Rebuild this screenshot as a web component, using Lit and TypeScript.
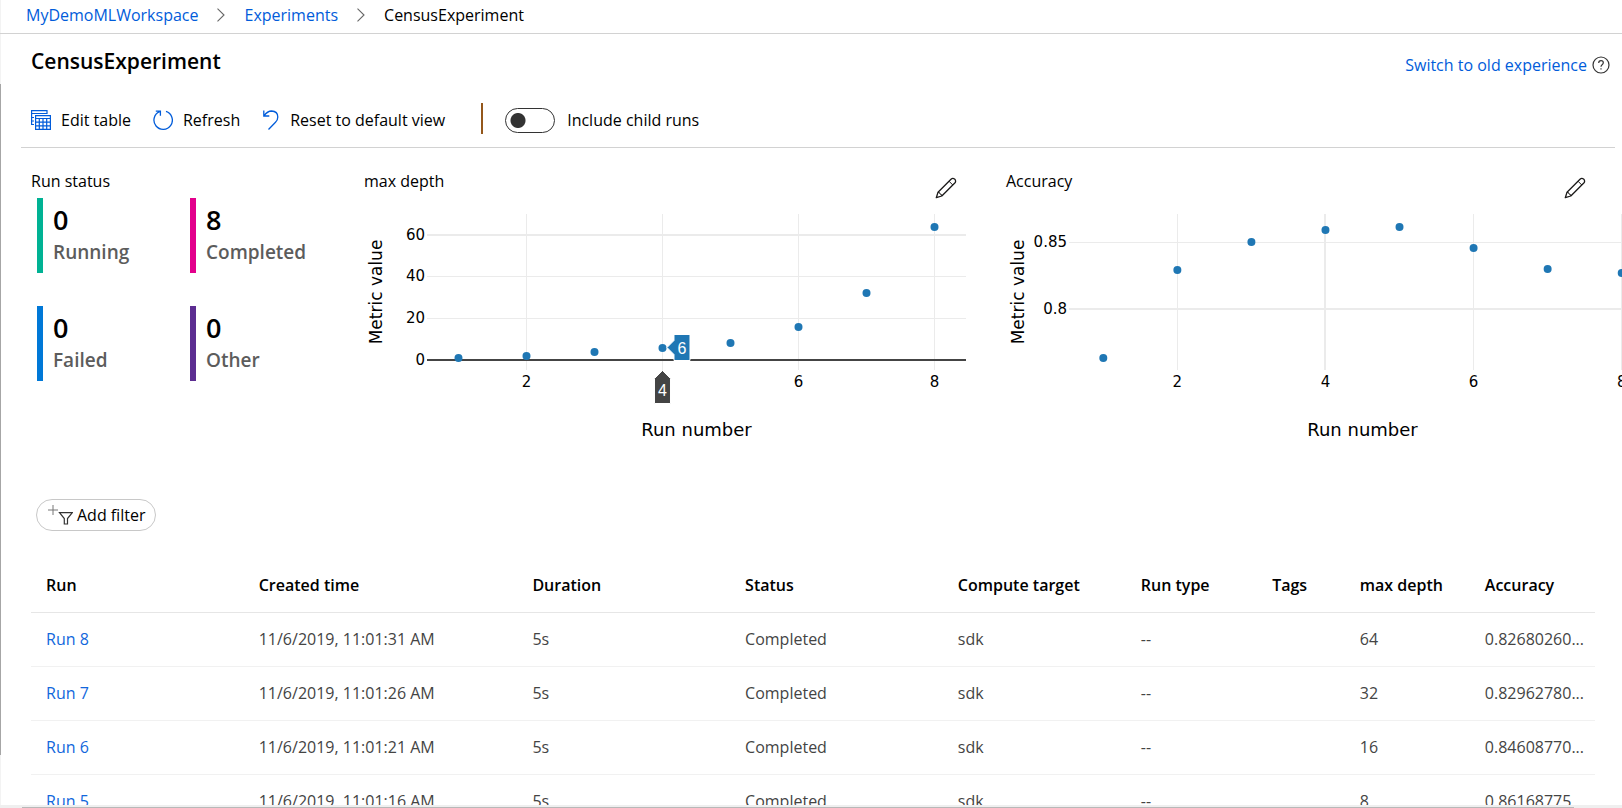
import { LitElement, html, svg, css, nothing } from "lit";
import { customElement, property } from "lit/decorators.js";

interface Run {
  id: number;
  created: string;
  depth: number;
  accuracy: string;
}

interface Tick {
  label: string;
  y: number;
  heavy?: boolean;
}

const RUNS: Run[] = [
  { id: 8, created: "11/6/2019, 11:01:31 AM", depth: 64, accuracy: "0.82680260..." },
  { id: 7, created: "11/6/2019, 11:01:26 AM", depth: 32, accuracy: "0.82962780..." },
  { id: 6, created: "11/6/2019, 11:01:21 AM", depth: 16, accuracy: "0.84608770..." },
  { id: 5, created: "11/6/2019, 11:01:16 AM", depth: 8, accuracy: "0.86168775..." },
];

const COLUMNS = [
  { label: "Run", width: 13.6 },
  { label: "Created time", width: 17.5 },
  { label: "Duration", width: 13.6 },
  { label: "Status", width: 13.6 },
  { label: "Compute target", width: 11.7 },
  { label: "Run type", width: 8.4 },
  { label: "Tags", width: 5.6 },
  { label: "max depth", width: 8 },
  { label: "Accuracy", width: 8 },
];

const STATUSES = [
  { count: 0, label: "Running", tone: "teal" },
  { count: 8, label: "Completed", tone: "pink" },
  { count: 0, label: "Failed", tone: "blue" },
  { count: 0, label: "Other", tone: "purple" },
];

// The x axis covers runs 1 to 8 with a little room on both sides.
const AXIS_START = 0.537;
const AXIS_SPAN = 7.926;
const runX = (run: number) => `${((run - AXIS_START) / AXIS_SPAN) * 100}%`;

@customElement("metric-chart")
export class MetricChart extends LitElement {
  @property() heading = "";
  @property({ attribute: false }) points: number[] = [];
  @property({ attribute: false }) ticks: Tick[] = [];
  @property({ type: Number }) zero = 0;
  @property({ type: Number }) heavyRun = 0;
  @property({ type: Number }) activeRun = 0;
  @property() activeValue = "";

  static styles = css`
    :host {
      display: block;
    }
    .head {
      display: flex;
      justify-content: space-between;
      height: 33px;
      padding-right: var(--tool-inset, 47px);
    }
    h2 {
      margin: 0;
      font-size: 16px;
      line-height: 26px;
      font-weight: 400;
    }
    button {
      align-self: end;
      display: flex;
      padding: 2px;
      border: 0;
      background: none;
      cursor: pointer;
    }
    .body {
      position: relative;
      height: 256px;
      margin: 13px var(--plot-inset, 40px) 0 63px;
    }
    .plot {
      display: block;
      width: 100%;
      height: 256px;
      overflow: visible;
      font-family: "DejaVu Sans", Verdana, sans-serif;
    }
    .tick {
      font-size: 15px;
    }
    .y-title {
      font-size: 17px;
    }
    .x-title {
      font-size: 18px;
    }
    .grid {
      stroke: #ebebeb;
      stroke-width: 1px;
      shape-rendering: crispEdges;
    }
    .heavy {
      stroke-width: 2px;
    }
    .zero {
      stroke: #444;
      stroke-width: 2px;
      shape-rendering: crispEdges;
    }
    .dot {
      fill: #1f77b4;
    }
    .hover {
      overflow: visible;
      font-family: "Liberation Sans", Arial, sans-serif;
      font-size: 16px;
    }
    .value {
      fill: #1f77b4;
      stroke: #fff;
    }
    .run {
      fill: #444;
      stroke: #fff;
    }
    .hover text {
      fill: #fff;
    }
  `;

  render() {
    return html`
      <div class="head">
        <h2>${this.heading}</h2>
        <button aria-label="Edit ${this.heading} chart">
          <svg width="22" height="22" viewBox="0 0 22 22" fill="none" stroke="#1b1a19" stroke-width="1.3" stroke-linejoin="round">
            <path d="M1.3 20.7 3 15.2 16 2.2Q17.8 .6 19.8 2.2Q21.4 4.2 19.8 6L6.8 19Z" />
            <path d="M14 4.2 17.8 8M3 15.2Q5 15 5 17Q7 17 6.8 19" stroke-width="1" />
          </svg>
        </button>
      </div>
      <div class="body">
        <svg class="plot" role="img" aria-label="${this.heading} by run number">
          ${[2, 4, 6, 8].map(
            (n) => svg`
              <line class="grid ${n === this.heavyRun ? "heavy" : ""}" x1=${runX(n)} x2=${runX(n)} y1="0" y2="156" />
              ${n === this.activeRun
                ? nothing
                : svg`<text class="tick" x=${runX(n)} y="173" text-anchor="middle">${n}</text>`}`
          )}
          ${this.ticks.map(
            (t) => svg`
              ${t.y === this.zero
                ? nothing
                : svg`<line class="grid ${t.heavy ? "heavy" : ""}" x1="0" x2="100%" y1=${t.y} y2=${t.y} />`}
              <text class="tick" x="-2" y=${t.y + 5} text-anchor="end">${t.label}</text>`
          )}
          ${this.zero ? svg`<line class="zero" x1="0" x2="100%" y1=${this.zero} y2=${this.zero} />` : nothing}
          ${this.points.map((y, i) => svg`<circle class="dot" cx=${runX(i + 1)} cy=${y} r="4" />`)}
          <text class="y-title" transform="translate(-45 78) rotate(-90)" text-anchor="middle">Metric value</text>
          <text class="x-title" x="50%" y="222" text-anchor="middle">Run number</text>
          ${this.activeRun
            ? svg`
              <svg class="hover" x=${runX(this.activeRun)} y="0">
                <path class="value" d="M4.5 133.5 11.5 126.5V120.500H27.5V146.5H11.5V140.5Z" />
                <text x="15" y="140">${this.activeValue}</text>
                <path class="run" d="M0 156.5 8 164.5V189.5H-8V164.5Z" />
                <text x="0" y="182" text-anchor="middle">${this.activeRun}</text>
              </svg>`
            : nothing}
        </svg>
      </div>
    `;
  }
}

@customElement("app-root")
export class AppRoot extends LitElement {
  static styles = css`
    :host {
      display: flex;
      flex-direction: column;
      height: 100vh;
      overflow: hidden;
      box-sizing: border-box;
      color: #000;
      font-family: "Open Sans", "Segoe UI", sans-serif;
      font-size: 16px;
      line-height: 24px;
      background:
        linear-gradient(#a6a6a6, #a6a6a6) 0 84px / 1px calc(100% - 137px) no-repeat,
        linear-gradient(#f3f3f3, #f3f3f3) 0 0 / 1px 100% no-repeat,
        #fff;
    }
    a {
      color: #015cda;
      text-decoration: none;
    }
    button {
      border: 0;
      padding: 0;
      background: none;
      color: inherit;
      font: inherit;
      cursor: pointer;
    }
    svg {
      display: block;
      flex: none;
    }
    .crumbs {
      flex: none;
      display: flex;
      align-items: center;
      gap: 18px;
      height: 34px;
      padding: 0 26px 4px;
      border-bottom: 1px solid #d2d2d2;
      box-sizing: border-box;
    }
    .content {
      flex: 1;
      min-height: 0;
      overflow: hidden;
    }
    .title {
      display: flex;
      justify-content: space-between;
      align-items: center;
      height: 62px;
      padding: 0 12px 0 31px;
    }
    h1 {
      margin: 0;
      padding-bottom: 8px;
      font-size: 21px;
      line-height: 28px;
      font-weight: 600;
    }
    .switch-link {
      display: flex;
      align-items: center;
      gap: 5px;
    }
    .toolbar {
      display: flex;
      align-items: center;
      height: 48px;
      margin: 0 7px 0 21px;
      padding: 0 0 3px 10px;
      border-bottom: 1px solid #d2d2d2;
    }
    .tool {
      display: flex;
      align-items: center;
      gap: 10px;
      height: 30px;
      margin-right: 22px;
    }
    .divider {
      width: 2px;
      height: 31px;
      margin: 0 22px 4px 14px;
      background: #94571b;
    }
    .toggle {
      display: flex;
      align-items: center;
      gap: 12px;
    }
    .toggle input {
      appearance: none;
      width: 50px;
      height: 25px;
      margin: 0;
      border: 1px solid #333;
      border-radius: 13px;
      background: radial-gradient(circle at 12px 50%, #333 7px, transparent 8px);
    }
    .summary {
      display: grid;
      grid-template-columns: 333px minmax(0, 642fr) minmax(0, 616fr);
      padding: 20px 0 0 31px;
      height: 331px;
      overflow: hidden;
    }
    h2 {
      margin: 0;
      font-size: 16px;
      line-height: 26px;
      font-weight: 400;
    }
    .statuses {
      display: grid;
      grid-template-columns: 153px 153px;
      gap: 33px 0;
      margin: 4px 0 0 6px;
    }
    .status {
      display: flex;
      flex-direction: column;
      height: 75px;
      border-left: 6px solid;
      padding-left: 10px;
      box-sizing: border-box;
      font-weight: 600;
    }
    .count {
      color: #000;
      font-size: 27px;
      line-height: 40px;
      padding-top: 2px;
    }
    .name {
      color: #5c5c5c;
      font-size: 19px;
      line-height: 25px;
    }
    .teal {
      border-color: #00b294;
    }
    .pink {
      border-color: #e3008c;
    }
    .blue {
      border-color: #0078d7;
    }
    .purple {
      border-color: #5c2d91;
    }
    .wide {
      --plot-inset: -34px;
      --tool-inset: 34px;
    }
    .filter {
      display: flex;
      align-items: center;
      gap: 4px;
      height: 32px;
      margin: 0 0 28px 36px;
      padding: 0 9px 0 10px;
      border: 1px solid #c8c8c8;
      border-radius: 16px;
      box-sizing: border-box;
    }
    .runs {
      width: calc(100% - 58px);
      margin-left: 31px;
      border-collapse: collapse;
      table-layout: fixed;
    }
    .runs th,
    .runs td {
      height: 54px;
      box-sizing: border-box;
      padding: 0 0 1px 15px;
      text-align: left;
      white-space: nowrap;
      border-bottom: 1px solid #f1f1f1;
    }
    .runs th {
      height: 53px;
      padding-bottom: 0;
      font-weight: 600;
      border-color: #e6e6e6;
    }
    .runs td {
      color: #444;
    }
    .runs a {
      color: #1267dc;
    }
    .scrollbar {
      flex: none;
      height: 3px;
      background: #efefef;
    }
    .thumb {
      height: 1px;
      margin: 0 48px 0 22px;
      border-top: 2px solid #efefef;
      background: #b8b8b8;
    }
  `;

  private chevron() {
    return html`<svg width="10" height="14" viewBox="0 0 10 14" fill="none" stroke="#666" stroke-width="1.1" aria-hidden="true">
      <path d="M1.5 .7 8 7 1.5 13.3" />
    </svg>`;
  }

  render() {
    return html`
      <nav class="crumbs" aria-label="Breadcrumb">
        <a href="#workspace">MyDemoMLWorkspace</a>
        ${this.chevron()}
        <a href="#experiments">Experiments</a>
        ${this.chevron()}
        <span>CensusExperiment</span>
      </nav>
      <main class="content">
        <div class="title">
          <h1>CensusExperiment</h1>
          <a class="switch-link" href="#old">
            Switch to old experience
            <svg width="18" height="18" viewBox="0 0 18 18" fill="none" stroke="#333" stroke-width="1.2" aria-hidden="true">
              <circle cx="9" cy="9" r="8" />
              <path d="M6.7 7Q6.7 4.7 9 4.7Q11.3 4.7 11.3 6.7Q11.3 7.8 10.1 8.7Q9 9.5 9 10.8M9 12.3V13.6" />
            </svg>
          </a>
        </div>
        <div class="toolbar">
          <button class="tool">
            <svg width="20" height="20" viewBox="0 0 20 20" fill="none" stroke="#015cda" stroke-width="1.2" aria-hidden="true">
              <path d="M16 4V.6H.6V14.5H3M.6 3.5H16M.6 7.5H3M.6 11H3" />
              <path d="M4.6 5.6H19.4V19.4H4.6ZM4.6 8.5H19.4M4.6 12.2H19.4M4.6 15.8H19.4M8.3 8.5V19.4M12 8.5V19.4M15.7 8.5V19.4" />
            </svg>
            Edit table
          </button>
          <button class="tool">
            <svg width="20" height="20" viewBox="0 0 20 20" fill="none" stroke="#015cda" stroke-width="1.3" aria-hidden="true">
              <path d="M13 1.4A9.2 9.2 0 1 1 6.5 1.7M2.8 1.2H7.4V5.8" />
            </svg>
            Refresh
          </button>
          <button class="tool">
            <svg width="18" height="20" viewBox="0 0 18 20" fill="none" stroke="#015cda" stroke-width="1.3" aria-hidden="true">
              <path d="M1.800 .5V6H7.300M2 5.800Q5.500 1 9.500 1Q15.800 1.300 15.800 7Q15.800 10 13.500 12.300L6.500 19.500" />
            </svg>
            Reset to default view
          </button>
          <span class="divider"></span>
          <label class="toggle"><input type="checkbox" role="switch" />Include child runs</label>
        </div>
        <section class="summary">
          <div>
            <h2>Run status</h2>
            <div class="statuses">
              ${STATUSES.map(
                (s) => html`<div class="status ${s.tone}">
                  <span class="count">${s.count}</span>
                  <span class="name">${s.label}</span>
                </div>`
              )}
            </div>
          </div>
          <metric-chart
            heading="max depth"
            .points=${[144, 142, 138, 134, 129, 113, 79, 13]}
            .ticks=${[
              { label: "60", y: 21, heavy: true },
              { label: "40", y: 62 },
              { label: "20", y: 104 },
              { label: "0", y: 146 },
            ]}
            .zero=${146}
            .activeRun=${4}
            activeValue="6"
          ></metric-chart>
          <metric-chart
            class="wide"
            heading="Accuracy"
            .points=${[144, 56, 28, 16, 13, 34, 55, 59]}
            .ticks=${[
              { label: "0.85", y: 28 },
              { label: "0.8", y: 95, heavy: true },
            ]}
            .heavyRun=${4}
          ></metric-chart>
        </section>
        <button class="filter">
          <svg width="26" height="24" viewBox="0 0 26 24" fill="none" stroke="#333" stroke-width="1.2" aria-hidden="true">
            <path d="M6 2V12M1 7H11" stroke="#777" stroke-width="1" />
            <path d="M12.5 9.6H25.3L20.5 15.5V21H17.3V15.5Z" />
          </svg>
          Add filter
        </button>
        <table class="runs">
          <colgroup>
            ${COLUMNS.map((c) => html`<col style="width:${c.width}%" />`)}
          </colgroup>
          <thead>
            <tr>
              ${COLUMNS.map((c) => html`<th scope="col">${c.label}</th>`)}
            </tr>
          </thead>
          <tbody>
            ${RUNS.map(
              (r) => html`<tr>
                <td><a href="#run-${r.id}">Run ${r.id}</a></td>
                <td>${r.created}</td>
                <td>5s</td>
                <td>Completed</td>
                <td>sdk</td>
                <td>--</td>
                <td></td>
                <td>${r.depth}</td>
                <td>${r.accuracy}</td>
              </tr>`
            )}
          </tbody>
        </table>
      </main>
      <div class="scrollbar"><div class="thumb"></div></div>
    `;
  }
}
